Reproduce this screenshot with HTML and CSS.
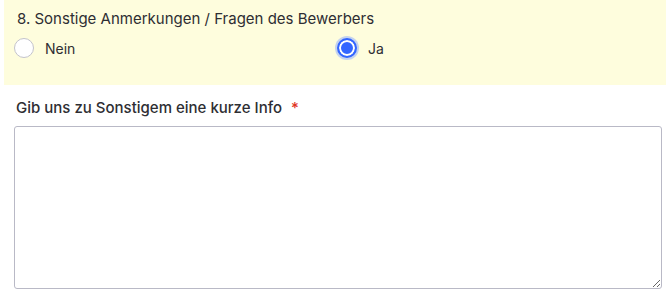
FILE: index.html
```html
<!DOCTYPE html>
<html>
<head>
    <meta charset="UTF-8">
    <link rel="stylesheet" href="styles.css">
</head>
<body>
    <div class="question">
        <div class="question-title">8. Sonstige Anmerkungen / Fragen des Bewerbers</div>
        <div class="options">
            <label class="option">
                <span class="radio"></span>
                <span>Nein</span>
            </label>
            <label class="option">
                <span class="radio checked"></span>
                <span>Ja</span>
            </label>
        </div>
    </div>
    <div class="field">
        <div class="field-label">Gib uns zu Sonstigem eine kurze Info <span class="required">*</span></div>
        <textarea class="field-input"></textarea>
    </div>
</body>
</html>
```

FILE: styles.css
```css
body {
    font-family: Inter, "Noto Sans", sans-serif;
    background-color: #fff;
    color: #2e2e33;
    margin: 0;
}
.question {
    margin-left: 4px;
    background-color: #fefddd;
    padding: 9px 10px 24px 10px;
}
.question-title {
    font-size: 15px;
    line-height: 20px;
    padding-left: 3px;
}
.options {
    display: grid;
    grid-template-columns: 323px 1fr;
    margin-top: 6px;
}
.option {
    display: flex;
    align-items: center;
    gap: 11px;
    font-size: 14px;
    height: 26px;
}
.radio {
    width: 18px;
    height: 18px;
    border: 1px solid #c3c3cc;
    border-radius: 50%;
    background-color: #fff;
}
.radio.checked {
    border: 2px solid #3366ff;
    width: 16px;
    height: 16px;
    background-color: #3366ff;
    box-shadow: inset 0 0 0 2px #fff, 0 0 0 2px #c5d3ee;
}
.field {
    padding: 0 4px 0 14px;
    margin-top: 13px;
}
.field-label {
    font-size: 15px;
    font-weight: 500;
    line-height: 20px;
    padding-left: 2px;
}
.required {
    color: #e0341e;
    margin-left: 5px;
}
.field-input {
    display: block;
    box-sizing: border-box;
    width: 648px;
    height: 163px;
    margin-top: 8px;
    border: 1px solid #b9b9c6;
    border-radius: 3px;
    background-color: #fff;
}
```
